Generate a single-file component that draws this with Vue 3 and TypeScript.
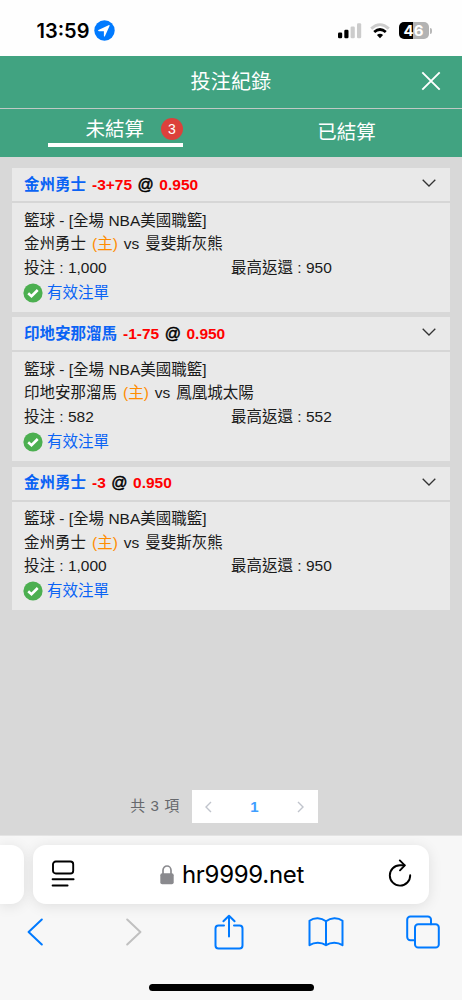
<script setup lang="ts">
interface Bet {
  pick: string
  line: string
  odds: string
  home: string
  away: string
  stake: string
  payout: string
}

const bets: Bet[] = [
  { pick: '金州勇士', line: '-3+75', odds: '0.950', home: '金州勇士', away: '曼斐斯灰熊', stake: '1,000', payout: '950' },
  { pick: '印地安那溜馬', line: '-1-75', odds: '0.950', home: '印地安那溜馬', away: '鳳凰城太陽', stake: '582', payout: '552' },
  { pick: '金州勇士', line: '-3', odds: '0.950', home: '金州勇士', away: '曼斐斯灰熊', stake: '1,000', payout: '950' },
]
</script>

<template>
  <div class="screen">
    <div class="status">
      <span class="time">13:59</span>
      <svg class="loc" width="21" height="21" viewBox="0 0 21 21">
        <circle cx="10.5" cy="10.5" r="10.2" fill="#007aff" />
        <path d="M4.4 10 14.6 5.2c.7-.3 1.2.2.9.9L10.9 16.2c-.3.6-1 .5-1-.2v-4.8H5c-.9 0-1.1-.9-.6-1.2z" fill="#fff" />
      </svg>
      <svg class="signal" width="24" height="16" viewBox="0 0 24 16">
        <rect x="0" y="9.5" width="4.2" height="5.8" rx="1.2" />
        <rect x="6.3" y="6.8" width="4.2" height="8.5" rx="1.2" />
        <rect x="12.6" y="3.6" width="4.2" height="11.7" rx="1.2" fill="#ccc" />
        <rect x="19" y="0.3" width="4.2" height="15" rx="1.2" fill="#ccc" />
      </svg>
      <svg class="wifi" width="20" height="16" viewBox="0 0 20 16">
        <path d="M1.2 5.6Q10-2.4 18.8 5.6" fill="none" stroke="#ccc" stroke-width="2.8" />
        <path d="M4.2 9q5.8-4.9 11.6 0" fill="none" stroke="#000" stroke-width="2.8" />
        <path d="M10 15.2 6.9 12.1q3.1-2.5 6.2 0z" />
      </svg>
      <div class="battery"><span>46</span></div>
      <i class="battery-tip"></i>
    </div>

    <header class="title">
      <span>投注紀錄</span>
      <svg class="close" width="20" height="20" viewBox="0 0 20 20">
        <path d="M1.3 1.3l17.4 17.4M18.7 1.3L1.3 18.7" fill="none" stroke="#fff" stroke-width="1.9" />
      </svg>
    </header>
    <nav class="tabs">
      <div class="tab active">
        <span>未結算</span><b class="badge">3</b>
      </div>
      <div class="tab"><span>已結算</span></div>
    </nav>

    <main class="body">
      <section v-for="(b, i) in bets" :key="i" class="card">
        <div class="head">
          <span class="pick">{{ b.pick }}</span>
          <span class="red">{{ b.line }}</span>
          <span class="at">@</span>
          <span class="red">{{ b.odds }}</span>
          <svg class="chev" width="14" height="8" viewBox="0 0 14 8">
            <path d="M.7.8 7 7 13.3.8" fill="none" stroke="#333" stroke-width="1.3" />
          </svg>
        </div>
        <div class="detail">
          <div class="row">籃球 - [全場 NBA美國職籃]</div>
          <div class="row match">
            <span>{{ b.home }}</span>
            <span class="host">(主)</span>
            <span>vs</span>
            <span>{{ b.away }}</span>
          </div>
          <div class="row money">
            <div>投注 : {{ b.stake }}</div>
            <div>最高返還 : {{ b.payout }}</div>
          </div>
          <div class="row valid">
            <svg width="20" height="20" viewBox="0 0 20 20">
              <circle cx="10" cy="10" r="9.6" fill="#4caf50" />
              <path d="M5.2 10.2 8.5 13.2 14.7 7" fill="none" stroke="#fff" stroke-width="2.6" />
            </svg>
            <span>有效注單</span>
          </div>
        </div>
      </section>

      <div class="pager">
        <span class="total">共 3 項</span>
        <div class="pages">
          <svg width="7" height="12" viewBox="0 0 7 12"><path d="M6 1 1 6l5 5" fill="none" stroke="#c0c4cc" stroke-width="1.4" /></svg>
          <b>1</b>
          <svg width="7" height="12" viewBox="0 0 7 12"><path d="M1 1l5 5-5 5" fill="none" stroke="#c0c4cc" stroke-width="1.4" /></svg>
        </div>
      </div>
    </main>

    <footer class="browser">
      <div class="bar-row">
        <div class="prev-tab"></div>
        <div class="address">
          <svg width="24" height="28" viewBox="0 0 24 28" fill="none" stroke="#000" stroke-width="1.9" stroke-linecap="round">
            <rect x="2" y="1.5" width="20.2" height="12" rx="2.8" />
            <path d="M1.6 19.2h21M1.6 25.5h15" />
          </svg>
          <div class="url">
            <svg width="14" height="20" viewBox="0 0 14 20">
              <path d="M3 9V5.2a4 4.2 0 0 1 8 0V9" fill="none" stroke="#8a8a8e" stroke-width="1.7" />
              <rect x=".3" y="8.3" width="13.4" height="10.9" rx="1.9" fill="#8a8a8e" />
            </svg>
            <span>hr9999.net</span>
          </div>
          <svg class="reload" width="24" height="28" viewBox="0 0 24 28" fill="none" stroke="#000" stroke-width="1.9" stroke-linecap="round" stroke-linejoin="round">
            <path d="M22.2 16.2A10.2 10.2 0 1 1 12 6.2h4.5" />
            <path d="M11.8 1.4l5 5-4.8 4.9" />
          </svg>
        </div>
      </div>
      <div class="tools">
        <svg width="16" height="28" viewBox="0 0 16 28"><path d="M14.8 1.5 1.6 14l13.2 12.5" /></svg>
        <svg class="off" width="16" height="28" viewBox="0 0 16 28"><path d="M1.2 1.5 14.4 14 1.2 26.5" /></svg>
        <svg width="30" height="36" viewBox="0 0 30 36">
          <path d="M10 11.5H4.5a3 3 0 0 0-3 3v17a3 3 0 0 0 3 3h21a3 3 0 0 0 3-3v-17a3 3 0 0 0-3-3H20M15 22.5V1.8M9.4 7.3 15 1.7 20.6 7.3" />
        </svg>
        <svg width="36" height="30" viewBox="0 0 36 30">
          <path d="M18 4.2C13.2.5 6.4.1 1.5 3.8v24.4c5-3.2 11.6-3.2 16.5 0 4.9-3.2 11.5-3.2 16.5 0V3.8C29.6.1 22.8.5 18 4.2zM18 4.2v24" />
        </svg>
        <svg width="34" height="34" viewBox="0 0 34 34">
          <rect x="9" y="9.2" width="23.8" height="23.4" rx="3.2" />
          <path d="M9 25.2H4.4A3.2 3.2 0 0 1 1.2 22V4.7a3.2 3.2 0 0 1 3.2-3.2h17.4A3.2 3.2 0 0 1 25 4.7v4.5" />
        </svg>
      </div>
      <div class="home"></div>
    </footer>
  </div>
</template>

<style>
body {
  margin: 0;
}
</style>

<style scoped>
* {
  box-sizing: border-box;
}
svg {
  display: block;
  flex: none;
}
.screen {
  width: 462px;
  height: 1000px;
  overflow: hidden;
  display: flex;
  flex-direction: column;
  background: #d8d8d8;
  color: #1a1a1a;
  font-family: 'Liberation Sans', 'Noto Sans CJK TC', sans-serif;
  font-size: 15.5px;
}
.status {
  height: 55.5px;
  flex: none;
  background: #fefefe;
  display: flex;
  align-items: center;
  padding: 6px 30.5px 0 36.5px;
}
.time {
  font: 600 20px/24px Inter, sans-serif;
  color: #000;
  width: 57px;
}
.signal {
  margin-left: auto;
}
.wifi {
  margin-left: 8px;
}
.battery {
  margin-left: 8.5px;
  width: 30px;
  height: 17px;
  border-radius: 5px;
  background: linear-gradient(90deg, #000 47%, #b3b3b3 47%);
  color: #fff;
  font: 700 15px/17px Inter, sans-serif;
  text-align: center;
}
.battery-tip {
  width: 2px;
  height: 6px;
  margin-left: 1px;
  border-radius: 0 2px 2px 0;
  background: #b8b8b8;
}
.title {
  height: 52px;
  flex: none;
  background: #41a381;
  color: #fff;
  font-size: 20px;
  display: grid;
  grid-template-columns: 1fr auto 1fr;
  align-items: center;
  padding: 0 21px 1.5px;
}
.title span {
  grid-column: 2;
  letter-spacing: 0.2px;
}
.close {
  justify-self: end;
}
.tabs {
  height: 49px;
  flex: none;
  border-top: 1.5px solid #bfc9c5;
  background: #41a381;
  color: #fff;
  display: grid;
  grid-template-columns: 1fr 1fr;
  font-size: 19.5px;
  justify-items: center;
  align-items: start;
}
.tab {
  height: 46px;
  line-height: 46px;
}
.tab.active {
  display: flex;
  align-items: center;
  justify-content: flex-end;
  width: 135px;
  height: 38px;
  padding-top: 6px;
  line-height: 32px;
  border-bottom: 4px solid #fff;
}
.badge {
  width: 22px;
  height: 22px;
  margin-left: 17px;
  border-radius: 50%;
  background: #dc413b;
  font-size: 14px;
  font-weight: 400;
  line-height: 22px;
  text-align: center;
}
.body {
  flex: 1;
  display: flex;
  flex-direction: column;
  gap: 5.6px;
  padding: 11.5px 12px 0;
}
.card {
  height: 143.7px;
  background: #e9e9e9;
}
.head {
  height: 35px;
  display: flex;
  align-items: center;
  gap: 6px;
  padding: 0 14px 0 12px;
  border-bottom: 2px solid #d6d6d6;
  font-weight: 700;
  line-height: 24px;
}
.pick {
  color: #0a63f5;
}
.red {
  color: #f00;
}
.at {
  margin: 0 -0.5px;
  color: #000;
  font-size: 16px;
  font-weight: 400;
  -webkit-text-stroke: 0.5px #000;
}
.chev {
  margin: -3px 0 0 auto;
}
.detail {
  padding: 5.5px 12px 0;
}
.row {
  height: 23.7px;
  line-height: 23.7px;
  display: flex;
  white-space: pre;
}
.match {
  gap: 6px;
}
.host {
  color: #ff8c00;
}
.money {
  display: grid;
  grid-template-columns: 1fr 1fr;
}
.valid {
  align-items: center;
  gap: 4px;
  height: 26px;
  margin-left: -1px;
  color: #0a63f5;
}
.pager {
  display: flex;
  align-items: center;
  justify-content: center;
  gap: 12px;
  margin: auto 14px 12px 0;
}
.total {
  color: #66686c;
  font-size: 15px;
  letter-spacing: 0.6px;
  line-height: 24px;
  padding-bottom: 1px;
}
.pages {
  width: 126px;
  height: 33px;
  background: #fff;
  display: flex;
  align-items: center;
  justify-content: space-between;
  padding: 0 14px 0 13px;
}
.pages b {
  color: #409eff;
  font: 700 15px 'Liberation Sans', sans-serif;
}
.browser {
  height: 165px;
  flex: none;
  background: #f7f7f7;
  border-top: 1px solid #e4e4e4;
}
.bar-row {
  display: flex;
  gap: 9.5px;
  padding-top: 8.5px;
}
.prev-tab {
  width: 23.5px;
  height: 59.5px;
  border-radius: 0 13px 13px 0;
  background: #fff;
  box-shadow: 0 2px 14px rgba(0, 0, 0, 0.1);
}
.address {
  width: 395.5px;
  height: 59.5px;
  border-radius: 13px;
  background: #fff;
  box-shadow: 0 2px 14px rgba(0, 0, 0, 0.1);
  display: flex;
  align-items: center;
  justify-content: space-between;
  padding: 0 16.5px 0 17.5px;
}
.reload {
  margin-bottom: 3px;
}
.url {
  display: flex;
  align-items: center;
  gap: 7.5px;
  padding: 1px 0 0 2px;
  color: #000;
  font: 400 24px/30px Inter, sans-serif;
  letter-spacing: -0.3px;
}
.tools {
  display: grid;
  grid-template-columns: repeat(5, 1fr);
  align-items: center;
  justify-items: center;
  height: 36px;
  margin: 9.5px -10px 0 -14px;
}
.tools svg {
  fill: none;
  stroke: #007aff;
  stroke-width: 2;
  stroke-linecap: round;
  stroke-linejoin: round;
}
.tools .off {
  margin-left: 5px;
  stroke: #c0c0c0;
}
.home {
  width: 165px;
  height: 6.5px;
  margin: 34.5px auto 0;
  border-radius: 4px;
  background: #000;
}
</style>
